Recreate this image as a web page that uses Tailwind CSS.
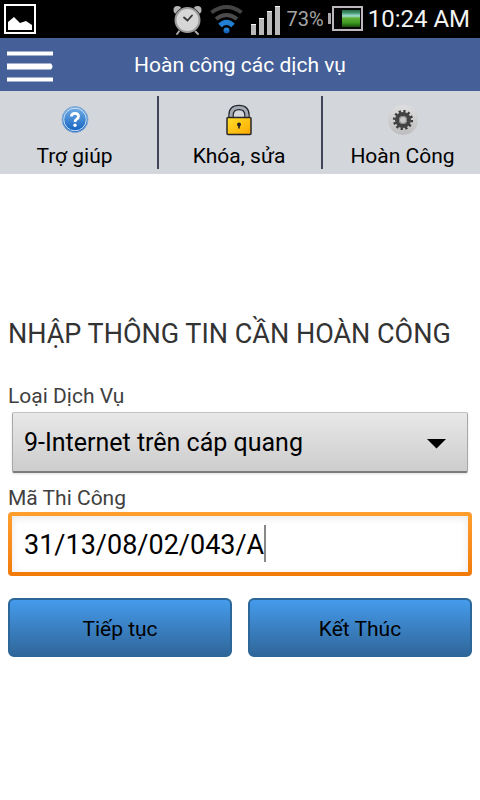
<!DOCTYPE html>
<html lang="vi">
<head>
<meta charset="utf-8">
<meta name="viewport" content="width=device-width, initial-scale=1">
<title>Hoàn công các dịch vụ</title>
<script src="https://cdn.jsdelivr.net/npm/@tailwindcss/browser@4"></script>
</head>
<body class="min-h-screen bg-white font-[Roboto,'Noto_Sans',sans-serif] text-black">

<!-- Status bar -->
<div class="flex h-[38px] items-center justify-between bg-black pl-1 pr-[10px] text-[#f2f2f2]">
  <svg class="h-8 w-8" viewBox="0 0 32 32" aria-hidden="true">
    <rect x="1" y="2" width="30" height="28" fill="#000" stroke="#fff" stroke-width="2"/>
    <path d="M4 27V19L10 14L16 20L22 18L28 22V27Z" fill="#fff"/>
  </svg>
  <div class="flex items-center">
    <svg class="h-[38px] w-[108px]" viewBox="0 0 108 38" aria-hidden="true">
      <defs>
        <linearGradient id="wifi" x1="0" y1="0" x2="0" y2="1"><stop offset="0" stop-color="#2f93e0"/><stop offset="1" stop-color="#0b50a8"/></linearGradient>
      </defs>
      <!-- alarm clock -->
      <g stroke-linecap="round">
        <path d="M7 30L4 34M21 30L25 34" stroke="#aaa" stroke-width="2"/>
        <circle cx="4.500" cy="10" r="4" fill="#b5b5b5"/><circle cx="24.500" cy="10" r="4" fill="#b5b5b5"/>
        <circle cx="14.500" cy="20" r="13.500" fill="#000"/>
        <circle cx="14.500" cy="20" r="12" fill="#d6d6d6" stroke="#9b9b9b" stroke-width="2"/>
        <path d="M11 17.500L14.500 20.500L19 15.500" fill="none" stroke="#333" stroke-width="1.800"/>
      </g>
      <!-- wifi -->
      <g fill="none" stroke-width="4">
        <path d="M38.500 12.500Q53.500 1.500 68.500 12.500" stroke="#444"/>
        <path d="M43 19Q53.500 11 64 19" stroke="#4b4b4b"/>
        <path d="M47 25.500Q53.500 19 60 25.500" stroke="#2180d4" stroke-width="5"/>
      </g>
      <circle cx="53.500" cy="30.500" r="3" fill="url(#wifi)"/>
      <!-- signal bars -->
      <g fill="#b9b9b9"><path d="M78 24h5v11h-5zM86 18h5v17h-5zM94 11h5v24h-5zM102 6h5v29h-5z"/></g>
      <g fill="#f5f5f5"><path d="M78 24h5v1h-5zM86 18h5v1h-5zM94 11h5v1h-5zM102 6h5v1h-5z"/></g>
    </svg>
    <span class="ml-[6px] text-[20px] leading-6 text-[#a5a5a5]">73%</span>
    <svg class="ml-1 h-[38px] w-[36px]" viewBox="0 0 36 38" aria-hidden="true">
      <defs>
        <linearGradient id="charge" x1="0" y1="0" x2="0" y2="1"><stop offset="0" stop-color="#2a6b45"/><stop offset=".15" stop-color="#3f8f66"/><stop offset=".35" stop-color="#9fdfd2"/><stop offset=".48" stop-color="#5fae35"/><stop offset=".75" stop-color="#3d9a20"/><stop offset="1" stop-color="#174c08"/></linearGradient>
      </defs>
      <path d="M0 13h3v11H0z" fill="#aaa"/>
      <rect x="5" y="7" width="29" height="23" fill="#060606" stroke="#bcb8bd" stroke-width="2"/>
      <rect x="14" y="10" width="18" height="17" fill="url(#charge)"/>
    </svg>
    <time class="ml-1 text-[24px] leading-7">10:24 AM</time>
  </div>
</div>

<!-- Title bar -->
<header class="grid h-[53px] grid-cols-[53px_1fr_53px] items-center bg-[#456098]">
  <button type="button" aria-label="Menu" class="pl-[7px]">
    <svg class="mt-1 h-8 w-[46px]" viewBox="0 0 46 32" aria-hidden="true">
      <path d="M0 .5h46v4H0zM0 12.500h44q3 3 0 6H0zM0 26.500h46v4H0z" fill="#fff"/>
    </svg>
  </button>
  <h1 class="text-center text-[21px] leading-7 text-white">Hoàn công các dịch vụ</h1>
</header>

<!-- Toolbar -->
<nav class="grid h-[83px] grid-cols-[157fr_2px_162fr_2px_157fr] bg-[#d3d6db] py-[5px] text-[21px] leading-6">
  <a href="#" class="flex flex-col items-center gap-2 pr-2 pt-2">
    <svg class="h-8 w-8" viewBox="0 0 32 32" aria-hidden="true">
      <defs><linearGradient id="help" x1="0" y1="0" x2="0" y2="1"><stop offset="0" stop-color="#74b0e6"/><stop offset="1" stop-color="#0f5fc0"/></linearGradient></defs>
      <circle cx="16" cy="15.500" r="13" fill="url(#help)" stroke="#85acd6" stroke-width="1"/>
      <circle cx="16" cy="15.500" r="11.300" fill="none" stroke="#cfe2f5" stroke-width="1"/>
      <path d="M12.500 12.500Q12.500 9.300 16 9.300T19.500 12.500Q19.500 14 17.700 15.100Q16 16.100 16 18" fill="none" stroke="#fff" stroke-width="2.800"/>
      <circle cx="16" cy="21.200" r="1.700" fill="#fff"/>
    </svg>
    <span>Trợ giúp</span>
  </a>
  <div class="bg-[#42445c]"></div>
  <a href="#" class="flex flex-col items-center gap-2 pr-[2px] pt-2">
    <svg class="h-8 w-8" viewBox="0 0 32 32" aria-hidden="true">
      <defs><linearGradient id="lock" x1="0" y1="0" x2="1" y2="1"><stop offset="0" stop-color="#ffdf2c"/><stop offset="1" stop-color="#fda800"/></linearGradient></defs>
      <path d="M8 14V11.500Q8 3.500 16 3.500T24 11.500V14" fill="none" stroke="#24262c" stroke-width="5.500"/>
      <path d="M8 14V11.500Q8 3.500 16 3.500T24 11.500V14" fill="none" stroke="#a3a9b3" stroke-width="3.200"/>
      <rect x="4" y="13.500" width="24" height="17" rx="1" fill="url(#lock)" stroke="#27272a" stroke-width="1.500"/>
      <circle cx="16" cy="20.500" r="2" fill="#222"/><path d="M15.200 21h1.600v3.500h-1.600z" fill="#222"/>
    </svg>
    <span>Khóa, sửa</span>
  </a>
  <div class="bg-[#42445c]"></div>
  <a href="#" class="flex flex-col items-center gap-2 pl-[2px] pt-2">
    <svg class="h-8 w-8" viewBox="0 0 32 32" aria-hidden="true">
      <defs><linearGradient id="disc" x1="0" y1="0" x2="0" y2="1"><stop offset="0" stop-color="#dedede"/><stop offset="1" stop-color="#bdbdbd"/></linearGradient></defs>
      <circle cx="16" cy="16" r="15" fill="url(#disc)"/>
      <circle cx="16" cy="16" r="8.800" fill="none" stroke="#3c3c3c" stroke-width="2.600" stroke-dasharray="2.300 2.308"/>
      <circle cx="16" cy="16" r="6" fill="none" stroke="#424242" stroke-width="4"/>
      <circle cx="16" cy="16" r="3.600" fill="#c9c9c9" stroke="#858585" stroke-width="1"/>
    </svg>
    <span>Hoàn Công</span>
  </a>
</nav>

<main class="px-2 pt-[144px]">
  <form>
    <h2 class="text-[27px] leading-8 text-[#333]">NHẬP THÔNG TIN CẦN HOÀN CÔNG</h2>

    <label for="service" class="mt-8 block text-[21px] leading-7 text-[#404040]">Loại Dịch Vụ</label>
    <div class="relative mx-1 mt-[2px]">
      <select id="service" class="block h-[61px] w-full appearance-none rounded-[2px] border border-t-[#c4c4c4] border-x-[#a8a8a8] border-b-2 border-b-[#7c7c7c] bg-linear-to-b from-[#e8e8e8] to-[#cdcdcd] pl-[11px] pr-12 pt-[2px] text-[25px] shadow-sm">
        <option>9-Internet trên cáp quang</option>
      </select>
      <svg class="pointer-events-none absolute right-[21px] top-[27px] h-[10px] w-[20px]" viewBox="0 0 20 10" aria-hidden="true"><path d="M0 0H19L9.500 9.500Z" fill="#000"/></svg>
    </div>

    <label for="code" class="mt-[11px] block text-[21px] leading-7 text-[#404040]">Mã Thi Công</label>
    <div class="relative rounded-[4px] bg-linear-to-b from-[#ff9f2e] to-[#f27a08] p-1">
      <input id="code" type="text" value="31/13/08/02/043/A" class="block h-14 w-full bg-white px-3 pt-[2px] text-[27px] shadow-[inset_0_2px_8px_#00000018] outline-none">
      <span class="absolute left-[256px] top-[13px] h-[37px] w-[2px] bg-[#888]" aria-hidden="true"></span>
    </div>

    <div class="mt-[22px] grid grid-cols-2 gap-4">
      <button type="button" class="h-[59px] rounded-[6px] border-2 border-[#2d6699] bg-linear-to-b from-[#459bec] to-[#30679b] pt-1 text-[21px]">Tiếp tục</button>
      <button type="button" class="h-[59px] rounded-[6px] border-2 border-[#2d6699] bg-linear-to-b from-[#459bec] to-[#30679b] pt-1 text-[21px]">Kết Thúc</button>
    </div>
  </form>
</main>
</body>
</html>
